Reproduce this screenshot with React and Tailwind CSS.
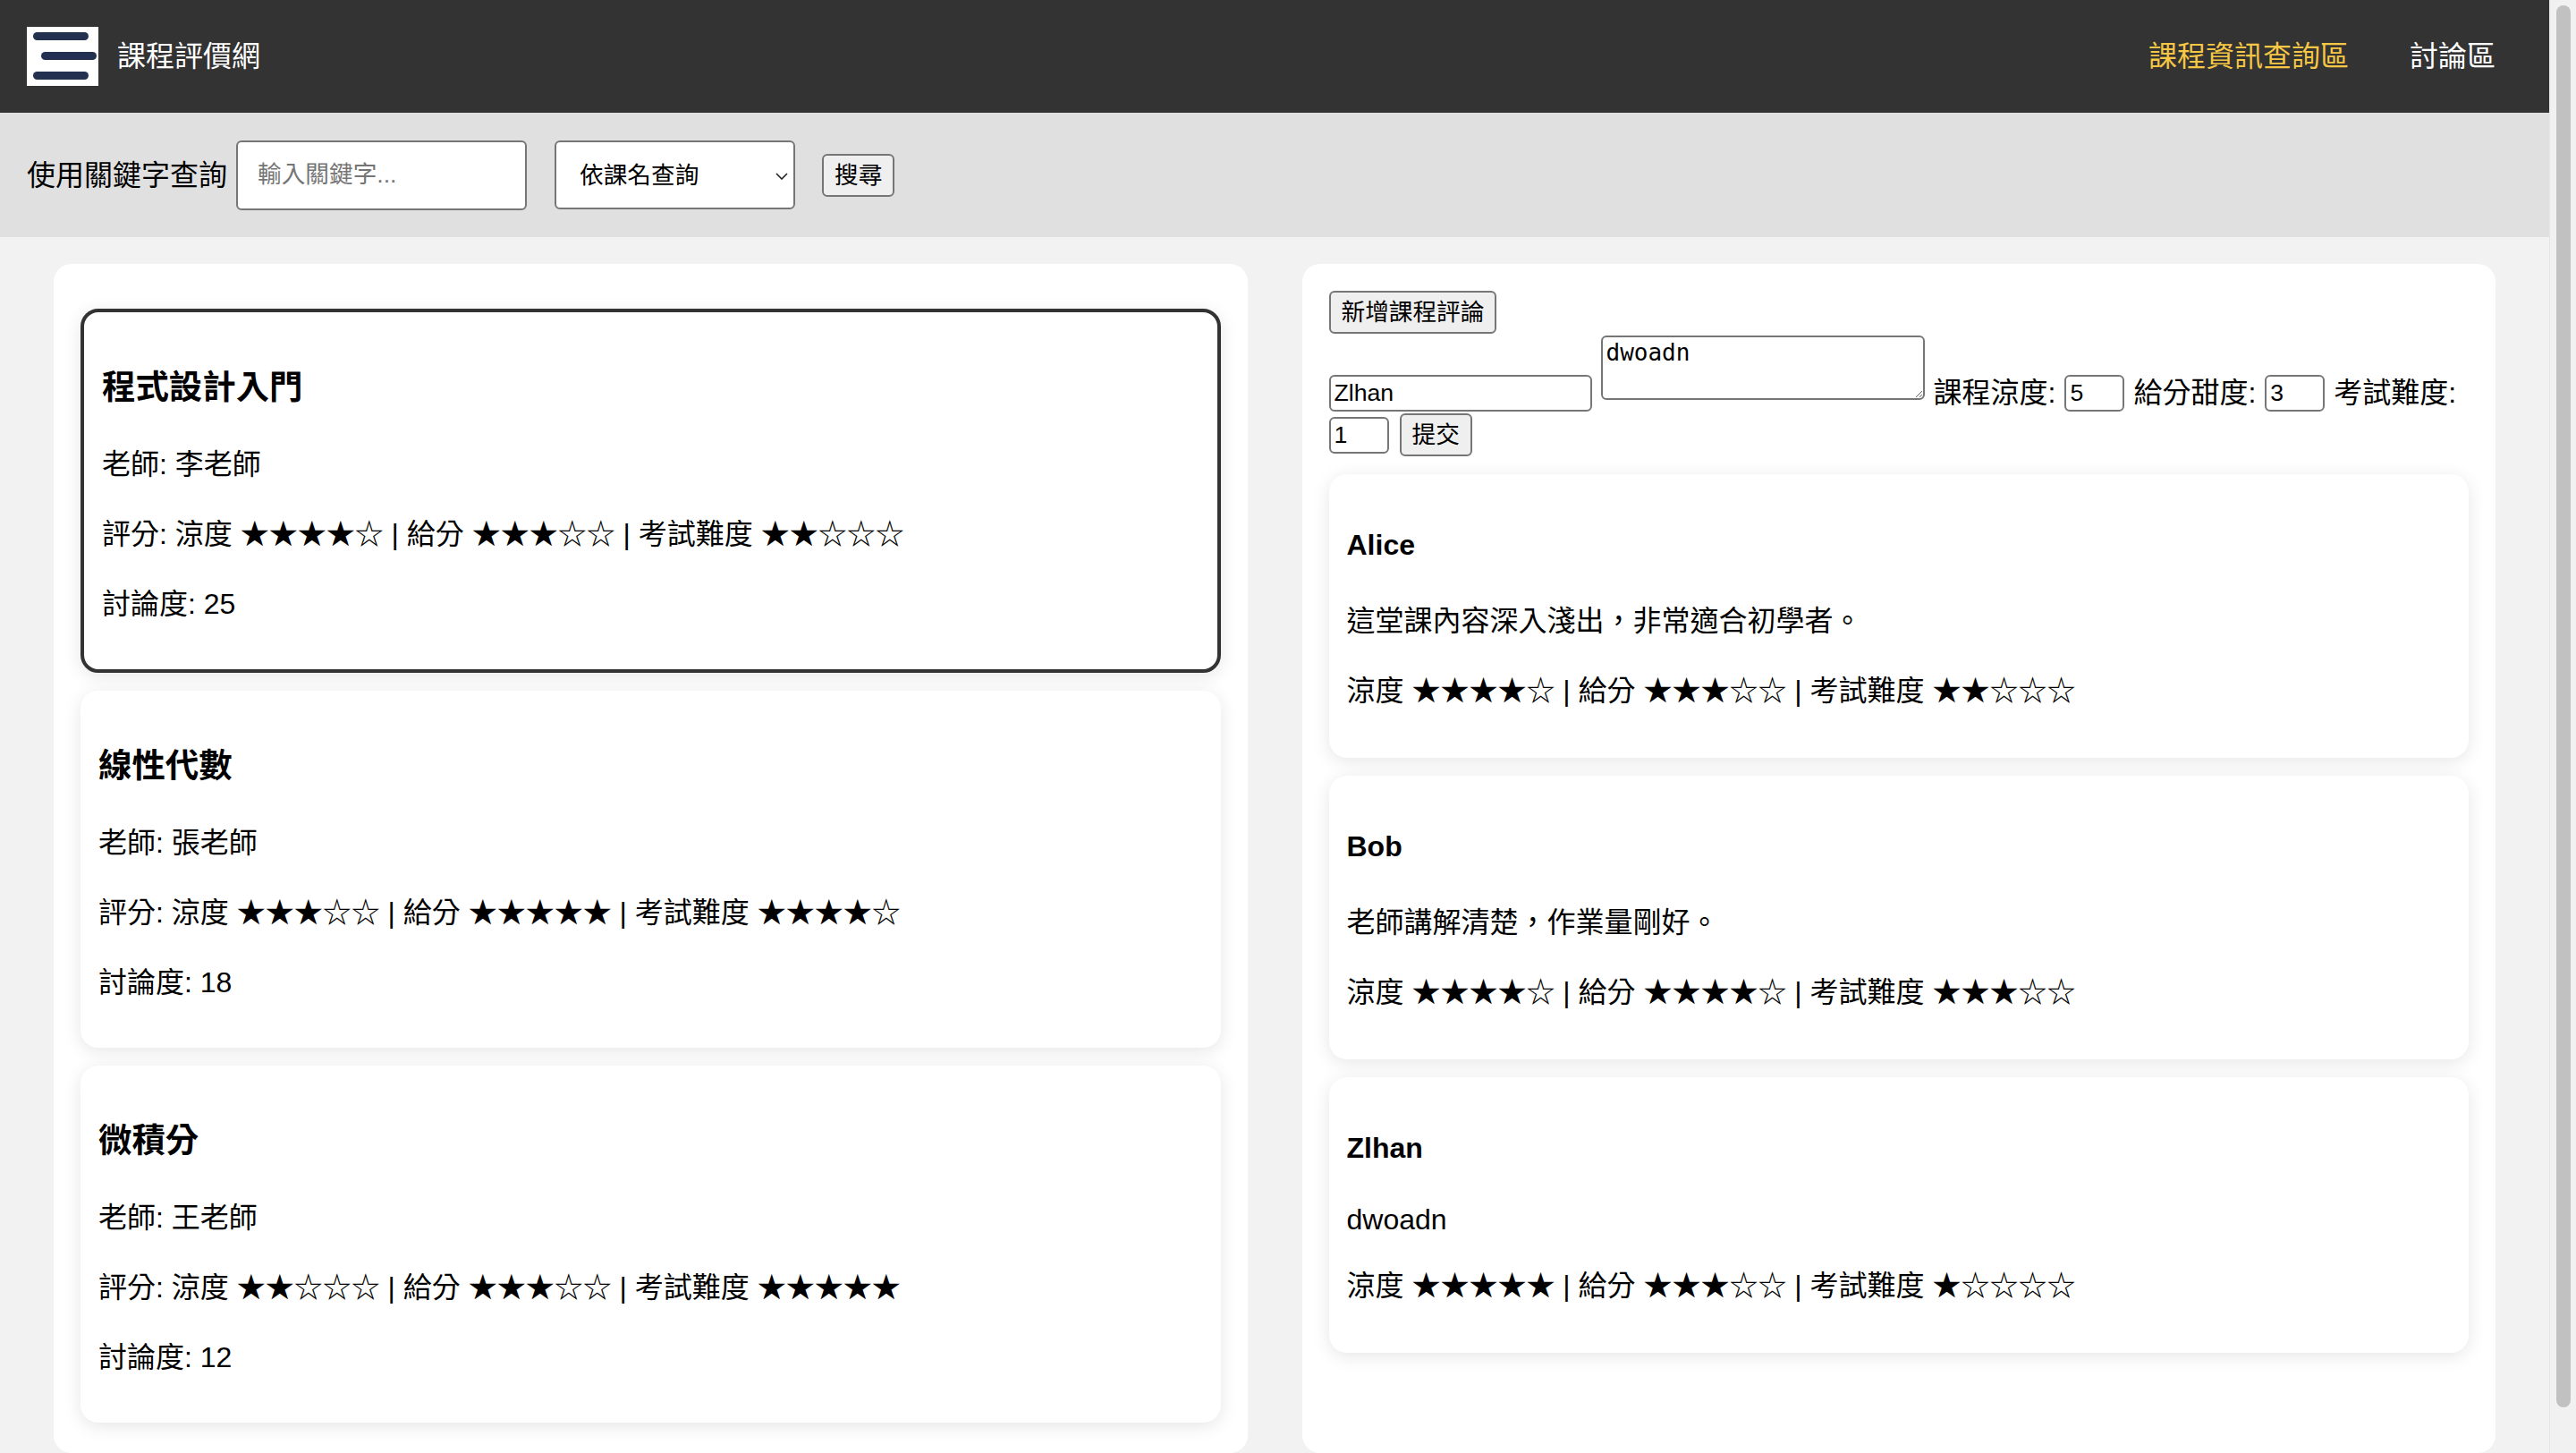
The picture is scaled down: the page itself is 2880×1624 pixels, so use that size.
import React from 'react';

const courses = [
    { name: '程式設計入門', teacher: '李老師', cool: 4, sweet: 3, hard: 2, talk: 25, active: true },
    { name: '線性代數', teacher: '張老師', cool: 3, sweet: 5, hard: 4, talk: 18 },
    { name: '微積分', teacher: '王老師', cool: 2, sweet: 3, hard: 5, talk: 12 },
];

const reviews = [
    { user: 'Alice', text: '這堂課內容深入淺出，非常適合初學者。', cool: 4, sweet: 3, hard: 2 },
    { user: 'Bob', text: '老師講解清楚，作業量剛好。', cool: 4, sweet: 4, hard: 3 },
    { user: 'Zlhan', text: 'dwoadn', cool: 5, sweet: 3, hard: 1, latin: true },
];

function Stars({ n }) {
    return (
        <span className="font-['Noto_Sans_CJK_TC',sans-serif] leading-[0px]">
            {'★'.repeat(n) + '☆'.repeat(5 - n)}
        </span>
    );
}

function Logo() {
    return (
        <svg width="80" height="66" viewBox="0 0 80 66" className="shrink-0">
            <rect width="80" height="66" fill="#ffffff" />
            <rect x="7" y="6" width="62" height="9" rx="4.5" fill="#23304f" />
            <rect x="16" y="28" width="62" height="9" rx="4.5" fill="#23304f" />
            <rect x="7" y="50" width="62" height="9" rx="4.5" fill="#23304f" />
        </svg>
    );
}

const control = "border-2 border-[#767676] rounded-[6px] bg-white text-[26.67px] text-black";
const btn = "border-2 border-[#767676] rounded-[6px] bg-[#efefef] text-[26.67px] text-black px-[12px]";

export default function App() {
    return (
        <div className="flex h-[1624px] overflow-hidden font-['Liberation_Sans','Noto_Sans_CJK_TC',sans-serif] text-black">
            <div className="flex-1 flex flex-col min-w-0">
                {/* Navbar */}
                <header className="h-[126px] shrink-0 bg-[#333333] flex items-center justify-between pl-[30px] pr-[60px]">
                    <div className="flex items-center">
                        <Logo />
                        <span className="ml-[21px] text-[32px] text-white">課程評價網</span>
                    </div>
                    <nav className="flex items-center gap-[68px] text-[32px]">
                        <a className="text-[#f6c744]">課程資訊查詢區</a>
                        <a className="text-white">討論區</a>
                    </nav>
                </header>

                {/* Search bar */}
                <div className="h-[139px] shrink-0 bg-[#e0e0e0] flex items-center pl-[30px]">
                    <span className="text-[32px]">使用關鍵字查詢</span>
                    <input
                        placeholder="輸入關鍵字..."
                        className={`${control} ml-[10px] w-[325px] h-[78px] px-[22px] placeholder:text-[#757575] outline-none`}
                    />
                    <div className="relative ml-[31px]">
                        <select className={`${control} appearance-none w-[269px] h-[77px] pl-[26px] outline-none`} defaultValue="name">
                            <option value="name">依課名查詢</option>
                            <option value="teacher">依老師查詢</option>
                        </select>
                        <svg width="14" height="8" viewBox="0 0 14 8" className="absolute right-[8px] top-[36px] pointer-events-none">
                            <path d="M1 1 L7 7 L13 1" fill="none" stroke="#222" strokeWidth="1.6" />
                        </svg>
                    </div>
                    <button className={`${btn} ml-[30px] h-[48px]`}>搜尋</button>
                </div>

                {/* Content */}
                <main className="flex-1 min-h-0 bg-[#f2f2f2] flex gap-[61px] px-[60px] pt-[30px]">
                    {/* Course list */}
                    <section className="flex-1 bg-white rounded-[20px] px-[30px] pt-[50px] pb-[200px] flex flex-col gap-[20px]">
                        {courses.map((c) => (
                            <div
                                key={c.name}
                                className={`rounded-[20px] bg-white p-[20px] shadow-[0_4px_20px_rgba(0,0,0,0.1)] ${c.active ? 'border-4 border-[#333333]' : ''}`}
                            >
                                <h3 className="text-[37.44px] font-bold leading-[52px] mt-[38px] mb-[37px]">{c.name}</h3>
                                <p className="text-[32px] leading-[46px] my-[32px]">老師: {c.teacher}</p>
                                <p className="text-[32px] leading-[46px] my-[32px]">
                                    評分: 涼度 <Stars n={c.cool} /> | 給分 <Stars n={c.sweet} /> | 考試難度 <Stars n={c.hard} />
                                </p>
                                <p className="text-[32px] leading-[46px] mt-[32px] mb-[30px]">討論度: {c.talk}</p>
                            </div>
                        ))}
                    </section>

                    {/* Discussion */}
                    <section className="flex-1 bg-white rounded-[20px] p-[30px] pb-[200px] flex flex-col">
                        <div>
                            <button className={`${btn} h-[48px]`}>新增課程評論</button>
                        </div>
                        <div className="flex items-end gap-[10px] text-[32px] mt-[2px]">
                            <input defaultValue="Zlhan" className={`${control} w-[294px] h-[41px] px-[4px]`} />
                            <textarea
                                defaultValue="dwoadn"
                                className={`${control} w-[362px] h-[72px] px-[4px] py-[2px] mb-[13px] font-['DejaVu_Sans_Mono',monospace] text-[26px] leading-[30px]`}
                            />
                            <span className="leading-[41px]">課程涼度:</span>
                            <input defaultValue="5" className={`${control} w-[67px] h-[41px] px-[4px]`} />
                            <span className="leading-[41px]">給分甜度:</span>
                            <input defaultValue="3" className={`${control} w-[67px] h-[41px] px-[4px]`} />
                            <span className="leading-[41px]">考試難度:</span>
                        </div>
                        <div className="flex items-center gap-[12px] mt-[2px]">
                            <input defaultValue="1" className={`${control} w-[67px] h-[41px] px-[4px]`} />
                            <button className={`${btn} h-[48px]`}>提交</button>
                        </div>

                        <div className="flex flex-col gap-[20px] mt-[20px]">
                            {reviews.map((r) => (
                                <div key={r.user} className="rounded-[20px] bg-white p-[20px] shadow-[0_4px_20px_rgba(0,0,0,0.1)]">
                                    <h4 className="text-[32px] font-bold leading-[37px] mt-[41px] mb-[43px]">{r.user}</h4>
                                    <p className={`text-[32px] my-[32px] ${r.latin ? 'leading-[37px]' : 'leading-[46px]'}`}>{r.text}</p>
                                    <p className="text-[32px] leading-[46px] mt-[32px] mb-[32px]">
                                        涼度 <Stars n={r.cool} /> | 給分 <Stars n={r.sweet} /> | 考試難度 <Stars n={r.hard} />
                                    </p>
                                </div>
                            ))}
                        </div>
                    </section>
                </main>
            </div>

            {/* Scrollbar */}
            <div className="w-[30px] shrink-0 bg-[#f1f1f1] border-l border-[#e4e4e4] pt-[6px] pl-[7px]">
                <div className="w-[16px] h-[1567px] rounded-full bg-[#c1c1c1]" />
            </div>
        </div>
    );
}
